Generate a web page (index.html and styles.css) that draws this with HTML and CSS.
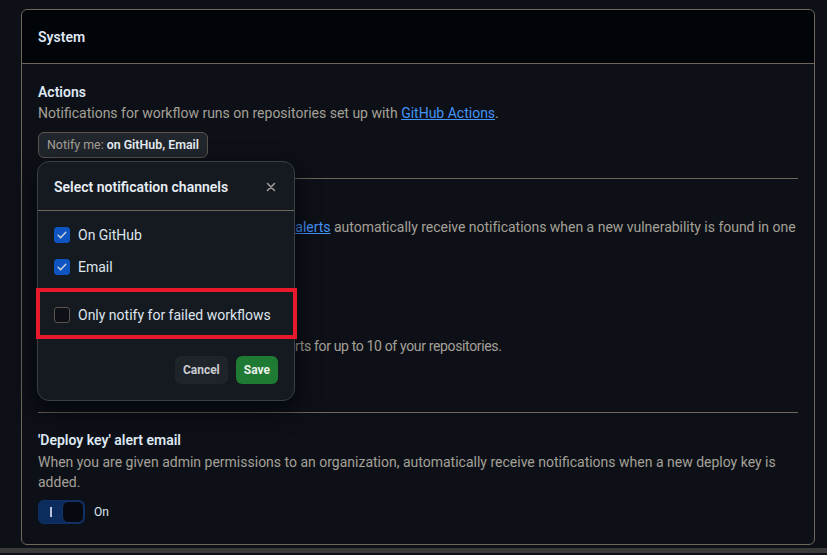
FILE: index.html
```html
<!DOCTYPE html>
<html lang="en">
<head>
<meta charset="utf-8">
<title>Notification settings</title>
<link rel="stylesheet" href="styles.css">
</head>
<body>
<div class="page">
  <div class="box">
    <div class="box-header">System</div>
    <div class="box-body">
      <section class="section first">
        <h3 class="heading">Actions</h3>
        <p class="desc">Notifications for workflow runs on repositories set up with <a href="#" class="link">GitHub Actions</a>.</p>
        <button class="notify-btn"><span class="muted">Notify me:</span> <strong>on GitHub, Email</strong></button>
      </section>
      <section class="section">
        <h3 class="heading">Dependabot alerts: New vulnerabilities</h3>
        <p class="desc tight">When you're given access to <a href="#" class="link">Dependabot alerts</a> automatically receive notifications when a new vulnerability is found in one of your dependencies.</p>
        <button class="notify-btn"><span class="muted">Notify me:</span> <strong>on GitHub, Email, CLI</strong></button>
        <div class="sub">
          <h3 class="heading">Dependabot alerts: Email digest</h3>
          <p class="desc tighter">Email a weekly summary of Dependabot alerts for up to 10 of your repositories.</p>
          <button class="notify-btn"><span class="muted">Notify me:</span> <strong>Weekly</strong></button>
        </div>
      </section>
      <section class="section last">
        <h3 class="heading">'Deploy key' alert email</h3>
        <p class="desc">When you are given admin permissions to an organization, automatically receive notifications when a new deploy key is added.</p>
        <div class="toggle-row">
          <span class="toggle"><span class="toggle-on-mark"></span><span class="knob"></span></span>
          <span class="toggle-label">On</span>
        </div>
      </section>
    </div>

    <div class="popover">
      <div class="pop-header">
        <span class="pop-title">Select notification channels</span>
        <svg class="close" width="16" height="16" viewBox="0 0 16 16"><path d="M4.5 4.5l7 7M11.5 4.5l-7 7" stroke="currentColor" stroke-width="1.6" stroke-linecap="round" fill="none"/></svg>
      </div>
      <div class="pop-body">
        <label class="row"><span class="cb checked"><svg width="12" height="12" viewBox="0 0 12 12"><path d="M2.2 6.3l2.4 2.4 5.2-5.4" stroke="#c9d1d9" stroke-width="1.5" fill="none" stroke-linecap="round" stroke-linejoin="round"/></svg></span>On GitHub</label>
        <label class="row"><span class="cb checked"><svg width="12" height="12" viewBox="0 0 12 12"><path d="M2.2 6.3l2.4 2.4 5.2-5.4" stroke="#c9d1d9" stroke-width="1.5" fill="none" stroke-linecap="round" stroke-linejoin="round"/></svg></span>Email</label>
        <label class="row row-failed"><span class="cb"></span>Only notify for failed workflows</label>
      </div>
      <div class="pop-footer">
        <button class="btn btn-cancel">Cancel</button>
        <button class="btn btn-save">Save</button>
      </div>
      <div class="highlight"></div>
    </div>
  </div>
  <div class="strip"></div>
</div>
</body>
</html>
```

FILE: styles.css
```css
* { box-sizing: border-box; }
html, body { margin: 0; padding: 0; }
body {
  background: #0d1117;
  font-family: Roboto, "Liberation Sans", sans-serif;
  font-size: 14px;
  line-height: 20px;
  color: #e6edf3;
  height: 555px;
  overflow: hidden;
}
.page {
  padding: 9px 12px 0 21px;
}
.box {
  position: relative;
  border: 1px solid #6e6659;
  border-radius: 6px;
  background: #0d1117;
}
.box-header {
  height: 54px;
  padding: 0 16px;
  display: flex;
  align-items: center;
  background: #010409;
  border-bottom: 1px solid #6e6659;
  border-radius: 6px 6px 0 0;
  font-weight: 600;
  color: #dfe8f3;
}
.box-body {
  padding: 0 16px 0 16px;
}
.section {
  padding: 17px 0 21px;
  border-bottom: 1px solid #6e6659;
}
.section.first {
  padding-top: 18px;
  padding-bottom: 20px;
}
.section.last {
  border-bottom: none;
  padding-top: 17px;
  padding-bottom: 20px;
}
.heading {
  margin: 0 0 1px;
  font-size: 14px;
  line-height: 20px;
  font-weight: 600;
  color: #dfe8f3;
}
.desc {
  margin: 0;
  color: #a5a098;
}
.section.last .heading { margin-bottom: 2px; }
.desc.tight { letter-spacing: -0.02px; }
.desc.tighter { letter-spacing: -0.35px; }
.link {
  color: #4493f8;
  text-decoration: underline;
}
.notify-btn {
  margin-top: 9px;
  height: 26px;
  padding: 0 8px;
  font: inherit;
  font-size: 12.4px;
  background: #21262d;
  border: 1px solid #5a554f;
  border-radius: 6px;
  color: #e6edf3;
  display: inline-flex;
  align-items: center;
  gap: 3px;
}
.notify-btn .muted { color: #a5a098; }
.notify-btn strong { font-weight: 600; }
.sub { margin-top: 23px; }

.toggle-row {
  margin-top: 8px;
  display: flex;
  align-items: center;
  gap: 9px;
}
.toggle {
  position: relative;
  width: 47px;
  height: 24px;
  border-radius: 6px;
  background: #0d2c5e;
  border: 1px solid #0f2f66;
  display: flex;
  align-items: center;
  justify-content: flex-end;
}
.toggle-on-mark {
  position: absolute;
  left: 11px;
  top: 6px;
  width: 2px;
  height: 10px;
  background: #b8c4d6;
}
.knob {
  width: 22px;
  height: 22px;
  border-radius: 6px;
  background: #060a10;
  border: 1px solid #143468;
}
.toggle-label {
  font-size: 12px;
  color: #dfe8f3;
}

.popover {
  position: absolute;
  left: 15px;
  top: 151px;
  width: 258px;
  background: #151a21;
  border: 1px solid #3a3f46;
  border-radius: 12px;
  box-shadow: 0 8px 24px rgba(1, 4, 9, 0.85);
}
.pop-header {
  height: 49px;
  padding: 2px 16px 0;
  display: flex;
  align-items: center;
  justify-content: space-between;
  border-bottom: 1px solid #6e6659;
}
.pop-title {
  font-weight: 600;
  color: #e6edf3;
}
.close {
  color: #9d9a95;
  margin-right: -1px;
}
.pop-body {
  padding: 8px 16px 0;
}
.row {
  height: 32px;
  display: flex;
  align-items: center;
  gap: 8px;
  color: #dfe5ec;
}
.row-failed { margin-top: 16px; }
.cb {
  width: 16px;
  height: 16px;
  border-radius: 3px;
  border: 1px solid #5a534b;
  background: #0d1117;
  display: inline-flex;
  align-items: center;
  justify-content: center;
  flex: none;
}
.cb.checked {
  background: #0f55c2;
  border-color: #0f55c2;
}
.pop-footer {
  display: flex;
  justify-content: flex-end;
  gap: 8px;
  padding: 25px 16px 16px;
}
.btn {
  height: 28px;
  padding: 0 8px;
  border: none;
  border-radius: 6px;
  font: inherit;
  font-size: 12px;
  font-weight: 700;
}
.btn-cancel {
  background: #1f242b;
  color: #c9ccd0;
}
.btn-save {
  background: #1f7a33;
  color: #e9f2ea;
}
.highlight {
  position: absolute;
  left: -2px;
  top: 126px;
  width: 261px;
  height: 51px;
  border: 4px solid #e8192c;
  pointer-events: none;
}
.strip {
  margin-top: 3px;
  height: 5px;
  margin-left: -21px;
  margin-right: -12px;
  background: #3a3a3a;
}
```
